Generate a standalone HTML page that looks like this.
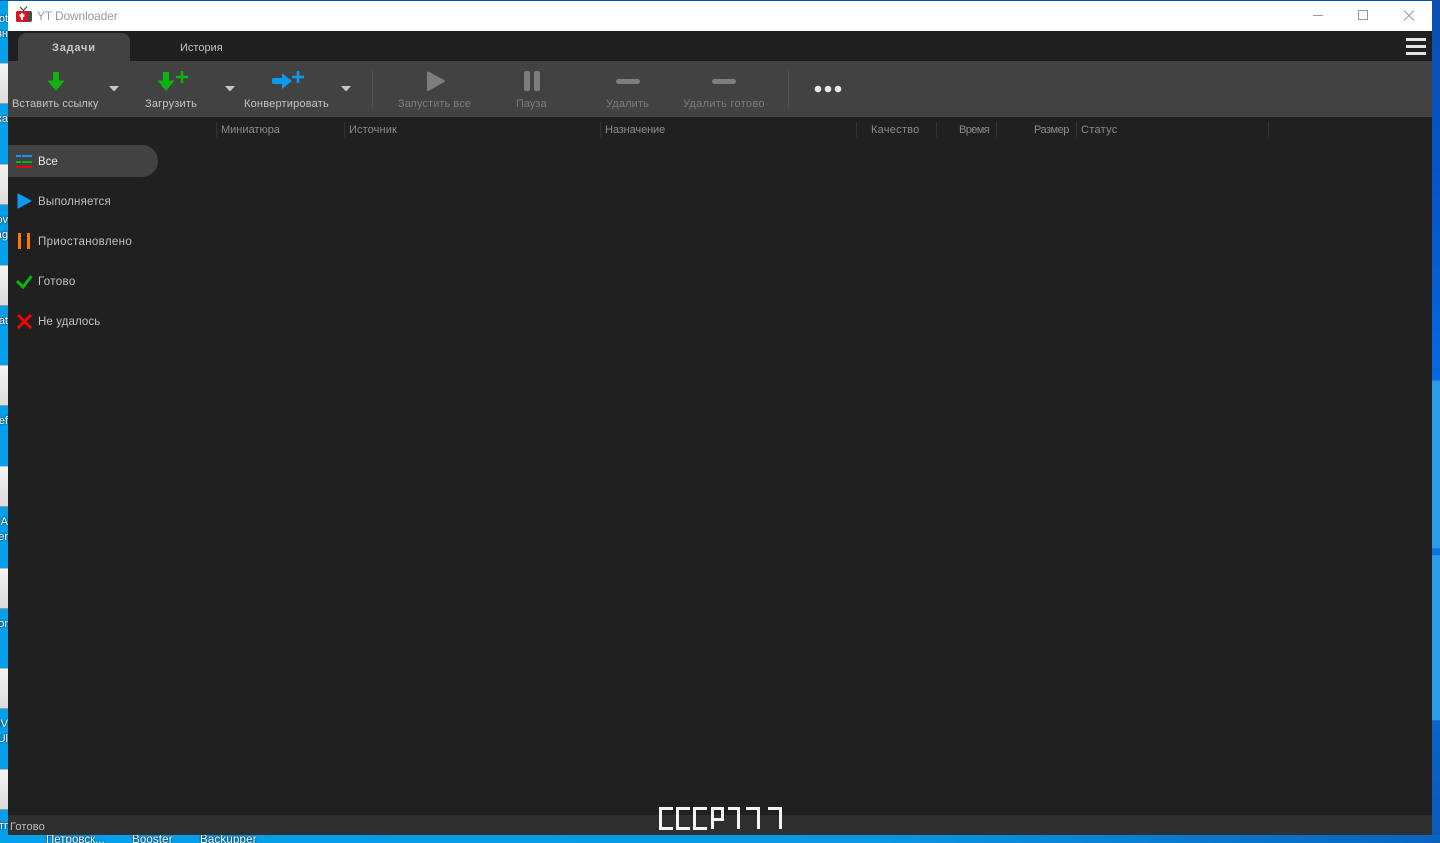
<!DOCTYPE html>
<html><head><meta charset="utf-8">
<style>
html,body{margin:0;padding:0;width:1440px;height:843px;overflow:hidden;background:#0a9fe8;font-family:"Liberation Sans","DejaVu Sans",sans-serif}
div,span,svg{position:absolute}
#root{left:0;top:0;width:1440px;height:843px;overflow:hidden}
.t{font-size:11px;white-space:nowrap;line-height:14px}
.tb{color:#c4c4c4}
.dis{color:#7d7d7d}
.h{color:#8c8c86}
.sep{position:absolute;width:1px;background:#333}
.side{color:#c2c2c2;font-size:11.5px;left:38px;white-space:nowrap;line-height:14px}
.w{left:0;width:8px;height:41px;background:linear-gradient(#f4f4f4,#dcdcdc);border-top:1px solid #bbb;border-bottom:1px solid #999;box-sizing:border-box}
.d{left:0;width:8px;font-size:11px;line-height:14px;color:#fff;overflow:hidden;white-space:nowrap;direction:rtl;text-shadow:0 0 2px #000}
</style></head><body>
<div id="root">
<div style="left:0;top:0;width:8px;height:843px;background:#06a0ea"></div>
<div class="w" style="top:63px"></div><div class="w" style="top:164px"></div><div class="w" style="top:265px"></div><div class="w" style="top:365px"></div><div class="w" style="top:466px"></div><div class="w" style="top:568px"></div><div class="w" style="top:668px"></div><div class="w" style="top:769px"></div>
<div class="d" style="top:12px">ot</div><div class="d" style="top:27px">зн</div><div class="d" style="top:112px">ка</div><div class="d" style="top:213px">ov</div><div class="d" style="top:228px">ag</div><div class="d" style="top:314px">at</div><div class="d" style="top:414px">ef</div><div class="d" style="top:515px">A</div><div class="d" style="top:530px">er</div><div class="d" style="top:617px">or</div><div class="d" style="top:717px">nV</div><div class="d" style="top:732px">Ul</div><div class="d" style="top:819px">тг</div>
<div style="left:1432px;top:0;width:8px;height:843px;background:linear-gradient(#0a4fae 0,#0654c4 20%,#0568e0 45%,#2a9ce8 45.3%,#2a9ce8 65%,#0f6fdc 65.1%,#0f6fdc 65.8%,#2a9ce8 65.9%,#2a9ce8 85.4%,#0b63c8 85.5%,#0a5ab8 100%)"></div>
<div style="left:0;top:835px;width:1440px;height:8px;background:linear-gradient(90deg,#06a0ea 0,#0a98e4 60%,#0a62c0 100%)"></div>
<div class="t" style="left:46px;top:833px;color:#fff;font-size:11.5px;text-shadow:0 0 2px #000">Петровск...</div>
<div class="t" style="left:132px;top:833px;color:#fff;font-size:11.5px;letter-spacing:.15px;text-shadow:0 0 2px #000">Booster</div>
<div class="t" style="left:200px;top:833px;color:#fff;font-size:11.5px;letter-spacing:.2px;text-shadow:0 0 2px #000">Backupper</div>
<div style="left:0;top:0;width:1440px;height:1px;background:#0a4fa8"></div>

<div style="left:8px;top:1px;width:1424px;height:834px;background:#202020;overflow:hidden">
  <div style="left:0;top:0;width:1424px;height:30px;background:#fff"></div>
  <div style="left:0;top:30px;width:1424px;height:30px;background:#1f1f1f"></div>
  <div style="left:10px;top:32px;width:112px;height:30px;background:#424242;border-radius:8px 8px 0 0"></div>
  <div style="left:0;top:60px;width:1424px;height:56px;background:#424242"></div>
  <div style="left:0;top:814px;width:1424px;height:20px;background:#2f2f2f"></div>
</div>

<svg style="left:15px;top:6px" width="18" height="17" viewBox="0 0 18 17"><path d="M5 1l3.500 3.500L12 .5" stroke="#333" fill="none"/><rect x="1" y="5" width="16" height="11" rx="2" fill="#4a4a4a"/><rect x="1" y="5" width="12" height="11" rx="2" fill="#e0101e"/><path d="M7 7v7M4.500 9.500h5" stroke="#fff" stroke-width="2"/><path d="M4.500 10l2.500 3 2.500-3z" fill="#fff"/></svg>
<div class="t" style="left:37px;top:9px;font-size:12px;color:#9a9a9a;letter-spacing:-.15px">YT Downloader</div>
<svg style="left:1310px;top:8px" width="110" height="14" viewBox="0 0 110 14" stroke="#999" fill="none"><path d="M3 7.500h10"/><rect x="48.500" y="2.500" width="9" height="9" stroke-width="1"/><path d="M94 2.500l10 10M104 2.500l-10 10"/></svg>

<div class="t" style="left:52px;top:41px;color:#c8c8c8;font-weight:bold;letter-spacing:.8px">Задачи</div>
<div class="t" style="left:180px;top:41px;color:#c4c4c4">История</div>
<svg style="left:1406px;top:38px" width="20" height="17"><rect width="20" height="3" y="0" fill="#e4e4e4"/><rect width="20" height="3" y="7" fill="#e4e4e4"/><rect width="20" height="3" y="14" fill="#e4e4e4"/></svg>

<svg style="left:47px;top:71px" width="18" height="21"><path d="M5.500 1h6v8.500H17L8.500 20 0 9.500h5.500z" fill="#0db30d" transform="translate(.5 0)"/></svg>
<svg style="left:157px;top:71px" width="32" height="21"><path d="M6 1h6v8.500h5.500L9 20 .5 9.500H6z" fill="#0db30d"/><path d="M19 6h12M25 0v12" stroke="#0db30d" stroke-width="2.500"/></svg>
<svg style="left:271px;top:71px" width="34" height="21"><path d="M2.500 7H11V2l10 8-10 8v-5H2.500Q1 13 1 11.500v-3Q1 7 2.500 7z" fill="#0a9bf0"/><path d="M21 6h12M27 0v12" stroke="#0a9bf0" stroke-width="2.500"/></svg>
<svg style="left:109px;top:86px" width="11" height="6"><path d="M0 0h10L5 5.500z" fill="#c8c8c8"/></svg>
<svg style="left:225px;top:86px" width="11" height="6"><path d="M0 0h10L5 5.500z" fill="#c8c8c8"/></svg>
<svg style="left:341px;top:86px" width="11" height="6"><path d="M0 0h10L5 5.500z" fill="#c8c8c8"/></svg>
<div class="t tb" style="left:12px;top:97px;letter-spacing:.07px">Вставить ссылку</div>
<div class="t tb" style="left:145px;top:97px;letter-spacing:.2px">Загрузить</div>
<div class="t tb" style="left:244px;top:97px;letter-spacing:.2px">Конвертировать</div>
<div class="sep" style="left:372px;top:70px;height:40px;background:#4e4e4e"></div>

<svg style="left:426px;top:70px" width="20" height="22"><path d="M2 2.500L18 11 2 20z" fill="#7d7d7d" stroke="#7d7d7d" stroke-width="2" stroke-linejoin="round"/></svg>
<svg style="left:523px;top:70px" width="18" height="22"><rect x="1" y="1" width="6" height="20" rx="2" fill="#7d7d7d"/><rect x="11" y="1" width="6" height="20" rx="2" fill="#7d7d7d"/></svg>
<div style="left:616px;top:79px;width:24px;height:5px;border-radius:2.500px;background:#7d7d7d"></div>
<div style="left:712px;top:79px;width:24px;height:5px;border-radius:2.500px;background:#7d7d7d"></div>
<div class="t dis" style="left:398px;top:97px;letter-spacing:.08px">Запустить все</div>
<div class="t dis" style="left:516px;top:97px">Пауза</div>
<div class="t dis" style="left:606px;top:97px;letter-spacing:.15px">Удалить</div>
<div class="t dis" style="left:683px;top:97px;letter-spacing:.3px">Удалить готово</div>
<div class="sep" style="left:788px;top:70px;height:40px;background:#4e4e4e"></div>
<svg style="left:814px;top:85px" width="28" height="8" fill="#e8e8e8"><circle cx="4" cy="4" r="3.300"/><circle cx="14" cy="4" r="3.300"/><circle cx="24" cy="4" r="3.300"/></svg>

<div class="sep" style="left:216px;top:122px;height:15px"></div>
<div class="sep" style="left:344px;top:122px;height:15px"></div>
<div class="sep" style="left:600px;top:122px;height:15px"></div>
<div class="sep" style="left:856px;top:122px;height:15px"></div>
<div class="sep" style="left:936px;top:122px;height:15px"></div>
<div class="sep" style="left:996px;top:122px;height:15px"></div>
<div class="sep" style="left:1076px;top:122px;height:15px"></div>
<div class="sep" style="left:1268px;top:122px;height:15px"></div>
<div class="t h" style="left:221px;top:123px">Миниатюра</div>
<div class="t h" style="left:349px;top:123px;letter-spacing:.12px">Источник</div>
<div class="t h" style="left:605px;top:123px;letter-spacing:-.1px">Назначение</div>
<div class="t h" style="left:871px;top:123px;letter-spacing:.25px">Качество</div>
<div class="t h" style="left:959px;top:123px;letter-spacing:-.6px">Время</div>
<div class="t h" style="left:1034px;top:123px;letter-spacing:-.5px">Размер</div>
<div class="t h" style="left:1081px;top:123px;letter-spacing:.3px">Статус</div>

<div style="left:8px;top:145px;width:150px;height:32px;background:#424242;border-radius:0 16px 16px 0"></div>
<svg style="left:16px;top:155px" width="16" height="14"><rect x="0" y="0" width="5" height="2" fill="#0a9bf0"/><rect x="6" y="0" width="10" height="2" fill="#0a9bf0"/><rect x="0" y="6" width="5" height="2" fill="#0db30d"/><rect x="6" y="6" width="10" height="2" fill="#0db30d"/><rect x="0" y="11" width="5" height="2" fill="#f00"/><rect x="6" y="11" width="10" height="2" fill="#f00"/></svg>
<div class="side" style="top:155px;color:#e8e8e8">Все</div>
<svg style="left:17px;top:193px" width="15" height="16"><path d="M1 1L14 8 1 15z" fill="#0a9bf0" stroke="#0a9bf0" stroke-linejoin="round"/></svg>
<div class="side" style="top:195px;letter-spacing:.2px">Выполняется</div>
<svg style="left:18px;top:233px" width="13" height="16"><rect x="0" y="0" width="3" height="16" fill="#f57c00"/><rect x="9" y="0" width="3" height="16" fill="#f57c00"/></svg>
<div class="side" style="top:235px;letter-spacing:.35px">Приостановлено</div>
<svg style="left:16px;top:274px" width="17" height="15"><path d="M1 7l6 6L15.500 2" stroke="#0db30d" stroke-width="3" fill="none"/></svg>
<div class="side" style="top:275px;letter-spacing:.35px">Готово</div>
<svg style="left:16px;top:313px" width="17" height="16"><path d="M2 2l13 13M15 2L2 15" stroke="#f00" stroke-width="2.800" fill="none"/></svg>
<div class="side" style="top:315px;letter-spacing:.1px">Не удалось</div>

<div class="t" style="left:10px;top:820px;color:#bdbdbd;letter-spacing:.15px">Готово</div>
<svg style="left:658px;top:806px" width="126" height="24" fill="none" stroke="#f4f4f4" stroke-width="3"><path d="M15 2.500H2.500v20H15"/><path d="M32 2.500H19.500v20H32"/><path d="M49 2.500H36.500v20H49"/><path d="M54.500 23V2.500h10v11h-10"/><path d="M70 2.500h10.500V23"/><path d="M88 2.500h12.500V23"/><path d="M110 2.500h12.500V23"/></svg>
</div>
</body></html>
